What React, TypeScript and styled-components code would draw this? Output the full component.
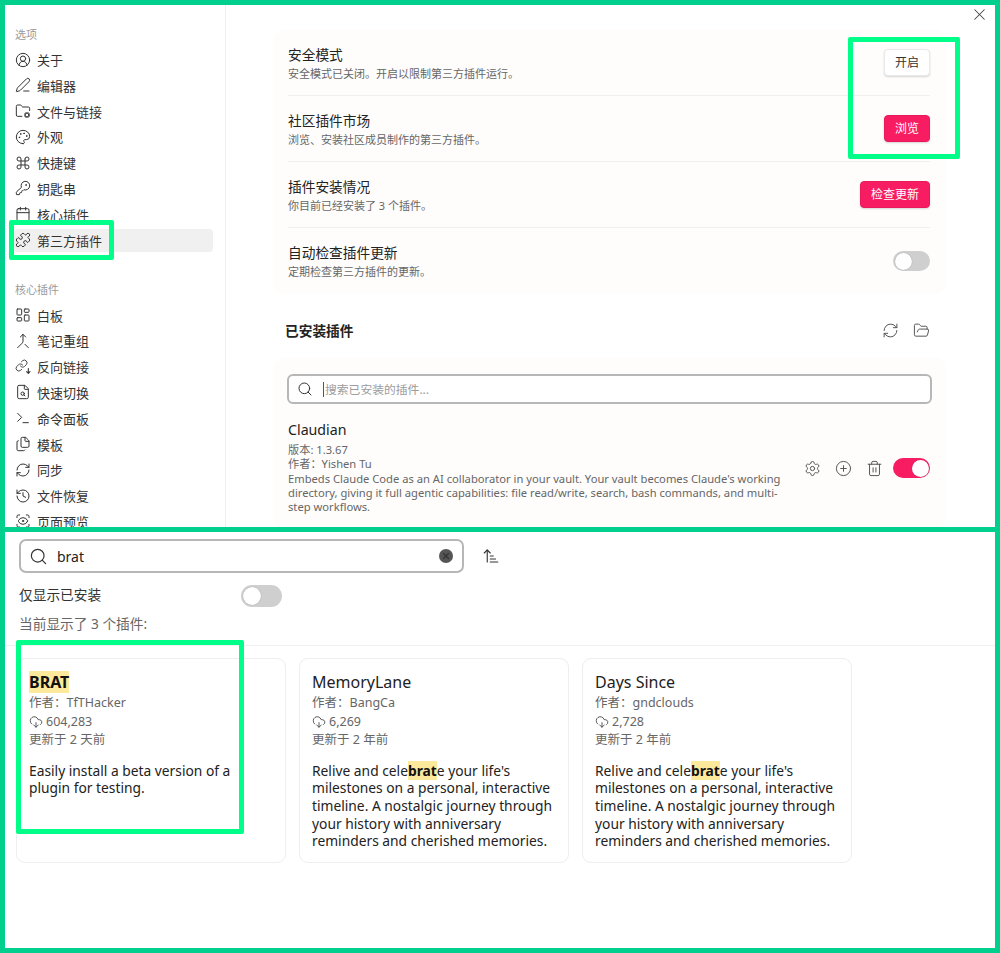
import React from "react";
import styled, { createGlobalStyle } from "styled-components";
import {
  CircleUserRound, PenLine, FolderCog, Palette, Command, KeyRound, Calendar, Puzzle,
  LayoutDashboard, Merge, FileSearch, Terminal, Files, RefreshCw, History, ScanEye,
  Search, ArrowUpNarrowWide, CloudDownload, Settings, CirclePlus, Trash2, FolderOpen, X,
} from "lucide-react";

const Global = createGlobalStyle`
  html, body { margin: 0; padding: 0; background: #fff; }
  * { box-sizing: border-box; }
  body { font-family: "Noto Sans", "Noto Sans CJK SC", sans-serif; color: #222; }
`;

const Frame = styled.div`
  position: relative;
  width: 1000px;
  height: 953px;
  border: 5px solid #00cf8e;
  display: flex;
  flex-direction: column;
  overflow: hidden;
`;
const TopPanel = styled.div`
  position: relative;
  height: 522px;
  display: flex;
  overflow: hidden;
  flex: none;
`;
const Separator = styled.div`
  height: 5px;
  background: #00cf8e;
  flex: none;
`;
const Sidebar = styled.nav`
  width: 221px;
  flex: none;
  border-right: 1px solid #efefef;
  padding: 22px 12px 0 9px;
  overflow: hidden;
`;
const SectionLabel = styled.div<{ $top?: number }>`
  font-size: 11px;
  line-height: 16px;
  color: #9a9a9a;
  margin-top: ${(p) => p.$top ?? 0}px;
  margin-bottom: ${(p) => (p.$top ? 6 : 5)}px;
  margin-left: 1px;
`;
const NavItem = styled.div<{ $active?: boolean }>`
  height: 23px;
  margin-bottom: 2.8px;
  display: flex;
  align-items: center;
  gap: 6px;
  padding-left: 1px;
  border-radius: 4px;
  font-size: 13px;
  color: #333;
  background: ${(p) => (p.$active ? "#f0f0f0" : "transparent")};
  svg { flex: none; color: #333; }
`;
const Main = styled.main`
  flex: 1;
  padding: 25px 0 0 47px;
  min-width: 0;
`;
const Panel = styled.section`
  width: 673px;
  background: #fefdfc;
  border-radius: 10px;
  padding: 0 16px 0 15px;
`;
const SettingRow = styled.div<{ $last?: boolean }>`
  height: 66px;
  display: flex;
  align-items: center;
  justify-content: space-between;
  border-bottom: ${(p) => (p.$last ? "none" : "1px solid #f1f0ef")};
`;
const RowTitle = styled.div`
  font-size: 13.7px;
  line-height: 19px;
  color: #222;
`;
const RowDesc = styled.div`
  font-size: 11px;
  line-height: 15px;
  margin-top: 2px;
  color: #666;
`;
const Button = styled.button<{ $primary?: boolean }>`
  height: 27px;
  min-width: 46px;
  padding: 0 10px;
  margin-bottom: 1px;
  border-radius: 4px;
  font: inherit;
  font-size: 12px;
  color: ${(p) => (p.$primary ? "#fff" : "#333")};
  background: ${(p) => (p.$primary ? "#f81c62" : "#fff")};
  border: 1px solid ${(p) => (p.$primary ? "#e91a5c" : "#eaeaea")};
  box-shadow: 0 1px 2px rgba(0, 0, 0, 0.16);
`;
const Toggle = styled.div<{ $on?: boolean; $big?: boolean }>`
  position: relative;
  width: ${(p) => (p.$big ? 41 : 37)}px;
  height: ${(p) => (p.$big ? 22 : 20)}px;
  border-radius: 11px;
  flex: none;
  background: ${(p) => (p.$on ? "#f81c62" : "#cfcfcf")};
  &::after {
    content: "";
    position: absolute;
    top: ${(p) => (p.$big ? 2 : 1.5)}px;
    ${(p) => (p.$on ? "right: 1.5px;" : p.$big ? "left: 2px;" : "left: 1.5px;")}
    width: ${(p) => (p.$big ? 18 : 17)}px;
    height: ${(p) => (p.$big ? 18 : 17)}px;
    border-radius: 50%;
    background: #fff;
    box-shadow: 0 0 1px rgba(0, 0, 0, 0.35);
  }
`;
const InstalledHeader = styled.div`
  width: 657px;
  height: 36px;
  margin-top: 18px;
  padding-left: 12px;
  display: flex;
  align-items: center;
  justify-content: space-between;
  h2 {
    margin: 0;
    font-size: 13.7px;
    font-weight: 700;
    color: #222;
  }
`;
const IconGroup = styled.div<{ $gap: number }>`
  display: flex;
  align-items: center;
  gap: ${(p) => p.$gap}px;
  color: #555;
  flex: none;
`;
const PluginActions = styled(IconGroup)`
  margin-top: 2px;
  margin-right: 2px;
`;
const ActionToggle = styled(Toggle)`
  margin-left: -4px;
`;
const InstalledPanel = styled(Panel)`
  margin-top: 10px;
  padding: 16px 14px 0;
  height: 170px;
`;
const SearchBox = styled.div<{ $big?: boolean }>`
  display: flex;
  align-items: center;
  height: ${(p) => (p.$big ? 34 : 30)}px;
  width: ${(p) => (p.$big ? 445 : 645)}px;
  border: 2px solid #b7b7b7;
  border-radius: ${(p) => (p.$big ? 7 : 6)}px;
  background: #fff;
  padding-left: 8px;
  gap: ${(p) => (p.$big ? 9 : 10)}px;
  flex: none;
  svg { flex: none; color: #333; }
`;
const Placeholder = styled.span`
  font-size: 11.8px;
  color: #9c9c9c;
  border-left: 1px solid #555;
  line-height: 15px;
  padding-left: 1px;
`;
const Typed = styled.span`
  font-size: 14px;
  color: #222;
  flex: 1;
`;
const PluginRow = styled.div`
  display: flex;
  align-items: center;
  justify-content: space-between;
  margin-top: 16px;
  padding-left: 1px;
`;
const PluginInfo = styled.div`
  width: 502px;
`;
const PluginName = styled.div`
  font-size: 14.2px;
  line-height: 20px;
  margin-bottom: 3px;
  color: #222;
`;
const PluginMeta = styled.div`
  font-size: 11.2px;
  line-height: 14.3px;
  color: #666;
`;
const ClearButton = styled.span`
  width: 14px;
  height: 14px;
  border-radius: 50%;
  background: #555;
  display: flex;
  align-items: center;
  justify-content: center;
  margin-right: 9px;
  flex: none;
  svg { color: #fff; }
`;
const BottomPanel = styled.div`
  flex: 1;
  min-height: 0;
`;
const SearchRow = styled.div`
  display: flex;
  align-items: center;
  gap: 18px;
  padding: 7px 0 0 14px;
  svg { color: #333; }
`;
const FilterRow = styled.div`
  display: flex;
  align-items: center;
  justify-content: space-between;
  width: 263px;
  margin: 11px 0 0 14px;
  height: 24px;
  font-size: 13.7px;
  color: #333;
  span { margin-bottom: 4px; }
`;
const CountLine = styled.div`
  margin: 5px 0 0 14px;
  height: 22px;
  font-size: 13.7px;
  line-height: 22px;
  color: #666;
`;
const Divider = styled.div`
  height: 1px;
  margin-top: 10px;
  background: #f1f1f1;
`;
const CardGrid = styled.div`
  display: flex;
  gap: 13px;
  padding: 12px 0 0 11px;
`;
const Card = styled.article`
  width: 270px;
  height: 205px;
  border: 1px solid #eeeeee;
  border-radius: 9px;
  padding: 12px 12px 0;
`;
const CardTitle = styled.div`
  font-size: 16px;
  line-height: 23px;
  color: #222;
`;
const CardMeta = styled.div`
  font-size: 12.5px;
  line-height: 18.5px;
  color: #666;
  display: flex;
  align-items: center;
  gap: 3px;
  svg { color: #444; flex: none; }
`;
const CardDesc = styled.div`
  margin-top: 12px;
  font-size: 13.8px;
  line-height: 17.7px;
  color: #222;
`;
const Mark = styled.mark`
  background: #fde99c;
  color: #111;
  font-weight: 700;
`;
const Callout = styled.div<{ $x: number; $y: number; $w: number; $h: number }>`
  position: absolute;
  left: ${(p) => p.$x - 5}px;
  top: ${(p) => p.$y - 5}px;
  width: ${(p) => p.$w}px;
  height: ${(p) => p.$h}px;
  border: 5px solid #00ff88;
  border-radius: 2px;
  pointer-events: none;
`;
const CloseIcon = styled.span`
  position: absolute;
  top: 0;
  right: 6px;
  color: #444;
  display: flex;
`;

const BacklinkIcon = ({ size = 16, strokeWidth = 1.5 }: { size?: number; strokeWidth?: number }) => (
  <svg width={size} height={size} viewBox="0 0 24 24" fill="none" stroke="currentColor" strokeWidth={strokeWidth * 1.1} strokeLinecap="round" strokeLinejoin="round">
    <g transform="scale(0.82)">
      <path d="M10 13a5 5 0 0 0 7.54.54l3-3a5 5 0 0 0-7.07-7.07l-1.72 1.71" />
      <path d="M14 11a5 5 0 0 0-7.54-.54l-3 3a5 5 0 0 0 7.07 7.07l1.71-1.71" />
    </g>
    <path d="M20 14.5v7M17.5 19l2.5 2.5 2.5-2.5" />
  </svg>
);

const general: [React.ElementType, string][] = [
  [CircleUserRound, "关于"], [PenLine, "编辑器"], [FolderCog, "文件与链接"], [Palette, "外观"],
  [Command, "快捷键"], [KeyRound, "钥匙串"], [Calendar, "核心插件"], [Puzzle, "第三方插件"],
];
const core: [React.ElementType, string][] = [
  [LayoutDashboard, "白板"], [Merge, "笔记重组"], [BacklinkIcon, "反向链接"], [FileSearch, "快速切换"],
  [Terminal, "命令面板"], [Files, "模板"], [RefreshCw, "同步"], [History, "文件恢复"], [ScanEye, "页面预览"],
];
const settings = [
  ["安全模式", "安全模式已关闭。开启以限制第三方插件运行。", "开启", false],
  ["社区插件市场", "浏览、安装社区成员制作的第三方插件。", "浏览", true],
  ["插件安装情况", "你目前已经安装了 3 个插件。", "检查更新", true],
] as const;

const Nav = ({ icon: Icon, label }: { icon: React.ElementType; label: string }) => (
  <NavItem $active={label === "第三方插件"}>
    <Icon size={16} strokeWidth={1.5} />
    <span>{label}</span>
  </NavItem>
);

const Celebrate = () => (
  <>Relive and cele<Mark>brat</Mark>e your life's milestones on a personal, interactive timeline. A nostalgic journey through your history with anniversary reminders and cherished memories.</>
);

const cards = [
  { title: <Mark>BRAT</Mark>, author: "TfTHacker", count: "604,283", updated: "更新于 2 天前", desc: <>Easily install a beta version of a plugin for testing.</> },
  { title: "MemoryLane", author: "BangCa", count: "6,269", updated: "更新于 2 年前", desc: <Celebrate /> },
  { title: "Days Since", author: "gndclouds", count: "2,728", updated: "更新于 2 年前", desc: <Celebrate /> },
];

export default function App() {
  return (
    <Frame>
      <Global />
      <TopPanel>
        <Sidebar>
          <SectionLabel>选项</SectionLabel>
          {general.map(([i, l]) => <Nav key={l} icon={i} label={l} />)}
          <SectionLabel $top={30}>核心插件</SectionLabel>
          {core.map(([i, l]) => <Nav key={l} icon={i} label={l} />)}
        </Sidebar>
        <Main>
          <Panel>
            {settings.map(([t, d, b, p]) => (
              <SettingRow key={t}>
                <div><RowTitle>{t}</RowTitle><RowDesc>{d}</RowDesc></div>
                <Button $primary={p}>{b}</Button>
              </SettingRow>
            ))}
            <SettingRow $last>
              <div><RowTitle>自动检查插件更新</RowTitle><RowDesc>定期检查第三方插件的更新。</RowDesc></div>
              <Toggle />
            </SettingRow>
          </Panel>
          <InstalledHeader>
            <h2>已安装插件</h2>
            <IconGroup $gap={14}>
              <RefreshCw size={17} strokeWidth={1.4} />
              <FolderOpen size={17} strokeWidth={1.4} />
            </IconGroup>
          </InstalledHeader>
          <InstalledPanel>
            <SearchBox>
              <Search size={16} strokeWidth={1.5} />
              <Placeholder>搜索已安装的插件...</Placeholder>
            </SearchBox>
            <PluginRow>
              <PluginInfo>
                <PluginName>Claudian</PluginName>
                <PluginMeta>版本: 1.3.67</PluginMeta>
                <PluginMeta>作者：Yishen Tu</PluginMeta>
                <PluginMeta>Embeds Claude Code as an AI collaborator in your vault. Your vault becomes Claude's working directory, giving it full agentic capabilities: file read/write, search, bash commands, and multi-step workflows.</PluginMeta>
              </PluginInfo>
              <PluginActions $gap={14}>
                <Settings size={17} strokeWidth={1.4} />
                <CirclePlus size={17} strokeWidth={1.4} />
                <Trash2 size={17} strokeWidth={1.4} />
                <ActionToggle $on />
              </PluginActions>
            </PluginRow>
          </InstalledPanel>
        </Main>
        <CloseIcon><X size={19} strokeWidth={1.3} /></CloseIcon>
      </TopPanel>
      <Separator />
      <BottomPanel>
        <SearchRow>
          <SearchBox $big>
            <Search size={19} strokeWidth={1.5} />
            <Typed>brat</Typed>
            <ClearButton><X size={10} strokeWidth={3} /></ClearButton>
          </SearchBox>
          <ArrowUpNarrowWide size={18} strokeWidth={1.5} />
        </SearchRow>
        <FilterRow>
          <span>仅显示已安装</span>
          <Toggle $big />
        </FilterRow>
        <CountLine>当前显示了 3 个插件:</CountLine>
        <Divider />
        <CardGrid>
          {cards.map((c) => (
            <Card key={c.author}>
              <CardTitle>{c.title}</CardTitle>
              <CardMeta>作者：{c.author}</CardMeta>
              <CardMeta><CloudDownload size={14} strokeWidth={1.5} />{c.count}</CardMeta>
              <CardMeta>{c.updated}</CardMeta>
              <CardDesc>{c.desc}</CardDesc>
            </Card>
          ))}
        </CardGrid>
      </BottomPanel>
      <Callout $x={848} $y={37} $w={112} $h={122} />
      <Callout $x={9} $y={220} $w={105} $h={40} />
      <Callout $x={16} $y={640} $w={228} $h={194} />
    </Frame>
  );
}
